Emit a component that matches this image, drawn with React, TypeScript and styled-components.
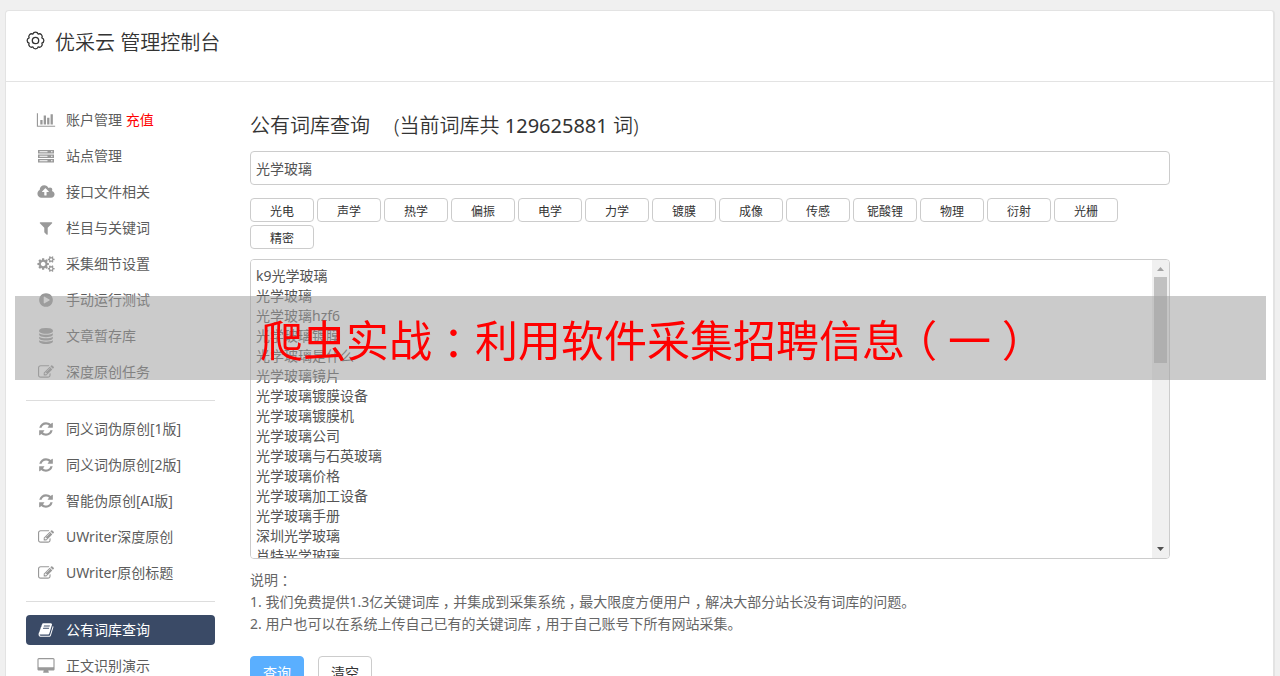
import React from 'react';
import styled, { createGlobalStyle } from 'styled-components';

const Global = createGlobalStyle`
  * { box-sizing: border-box; }
  html { scrollbar-width: none; }
  body {
    margin: 0;
    background: #f0f0f0;
    color: #555;
    font: 400 14px/20px "Noto Sans", "Noto Sans CJK SC", sans-serif;
  }
  button, input, textarea { font: inherit; }
`;

const Page = styled.div`
  padding: 10px 5px 0;
`;

const Panel = styled.div`
  background: #fff;
  border: 1px solid #e3e3e3;
  border-right-width: 2px;
  border-radius: 4px 4px 0 0;
`;

const Header = styled.header`
  display: flex;
  align-items: flex-start;
  gap: 10px;
  height: 71px;
  padding: 20px 20px 0;
  border-bottom: 1px solid #e3e3e3;
  color: #333;
`;

const HeaderTitle = styled.h1`
  margin: 0;
  font-size: 20px;
  line-height: 24px;
  font-weight: 350;
`;

const Body = styled.div`
  display: flex;
  align-items: flex-start;
  gap: 35px;
  padding: 23px 103px 20px 20px;
`;

const Sidebar = styled.nav`
  flex: none;
  width: 189px;
`;

const NavGroup = styled.ul`
  display: flex;
  flex-direction: column;
  gap: 6px;
  margin: 0;
  padding: 0 0 13px;
  list-style: none;

  & + & {
    padding-top: 13px;
    border-top: 1px solid #ddd;
  }
`;

const NavLink = styled.a<{ $active?: boolean }>`
  display: flex;
  align-items: center;
  gap: 10px;
  height: 30px;
  padding: 0 10px;
  border-radius: 4px;
  color: ${(p) => (p.$active ? '#fff' : '#5c5c5c')};
  background: ${(p) => (p.$active ? '#3a4a66' : 'transparent')};
  text-decoration: none;
  white-space: nowrap;

  svg {
    flex: none;
    width: 20px;
    color: ${(p) => (p.$active ? '#fff' : '#999')};
  }
`;

const Recharge = styled.span`
  color: #f00;
`;

const Main = styled.main`
  flex: 1;
  min-width: 0;
`;

const Title = styled.h2`
  display: flex;
  gap: 24px;
  margin: 0 0 11px;
  padding-top: 7px;
  font-size: 20px;
  line-height: 28px;
  font-weight: 350;
  color: #333;
`;

const Total = styled.span`
  font-weight: 400;
`;

const Search = styled.input`
  display: block;
  width: 100%;
  height: 34px;
  padding: 4px 5px;
  border: 1px solid #ccc;
  border-radius: 4px;
  color: #555;
`;

const Tags = styled.div`
  display: flex;
  flex-wrap: wrap;
  gap: 3px;
  margin: 13px 0 10px;
`;

const Tag = styled.button`
  width: 64px;
  height: 24px;
  padding: 3px 0 0;
  border: 1px solid #ccc;
  border-radius: 4px;
  background: #fff;
  color: #333;
  font-size: 12px;
  line-height: 18px;
`;

const WordsBox = styled.div`
  display: flex;
  height: 300px;
  border: 1px solid #ccc;
  border-radius: 4px;
  overflow: hidden;
`;

const Words = styled.textarea`
  flex: 1;
  min-width: 0;
  padding: 6px 5px;
  border: 0;
  outline: 0;
  background: #fff;
  color: #555;
  line-height: 20px;
  resize: none;
  scrollbar-width: none;
`;

const Scrollbar = styled.div`
  display: flex;
  flex-direction: column;
  align-items: center;
  width: 17px;
  background: #f0f0f0;
`;

const Track = styled.div`
  flex: 1;
  width: 13px;
`;

const Thumb = styled.div`
  height: 86px;
  background: #c1c1c1;
`;

const Notes = styled.div`
  margin: 10px 0 21px;
  line-height: 22px;
  color: #666;

  p { margin: 0; }
`;

const Actions = styled.div`
  display: flex;
  gap: 14px;
`;

const Action = styled.button<{ $primary?: boolean }>`
  width: 54px;
  height: 34px;
  padding: 0;
  border: 1px solid ${(p) => (p.$primary ? '#5aafff' : '#ccc')};
  border-radius: 4px;
  background: ${(p) => (p.$primary ? '#5aafff' : '#fff')};
  color: ${(p) => (p.$primary ? '#fff' : '#333')};
`;

const Banner = styled.div`
  position: absolute;
  top: 296px;
  left: 15px;
  right: 14px;
  height: 84px;
  padding-left: 245px;
  background: rgba(160, 160, 160, 0.55);
  color: #f00;
  font-size: 43px;
  line-height: 90px;
  white-space: nowrap;
  overflow: hidden;
`;

/* Full-width punctuation set in the middle of its em square */
const Mark = styled.span`
  display: inline-block;
  width: 1em;
  text-align: center;
  font-feature-settings: "halt";
`;

const Centered = ({ text }: { text: string }) => (
  <>
    {text.split(/([：，（）])/).map((part, i) => (i % 2 ? <Mark key={i}>{part}</Mark> : part))}
  </>
);

type Glyph = { box: string; d: string };

const glyphs: Record<string, Glyph> = {
  chart: { box: '0 0 2048 1792', d: 'M640 896v512h-256v-512h256zM1024 384v1024h-256v-1024h256zM2048 1536v128h-2048v-1536h128v1408h1920zM1408 640v768h-256v-768h256zM1792 256v1152h-256v-1152h256z' },
  server: { box: '0 0 16 16', d: 'M0 2h16v3.500H0zM0 6.500h16V10H0zM0 11h16v3.500H0zM1.500 3.200v1h8v-1zM1.500 7.700v1h8v-1zM1.500 12.200v1h8v-1zM13 3.200v1h1.500v-1zM13 7.700v1h1.500v-1zM13 12.200v1h1.500v-1z' },
  cloud: { box: '0 0 1920 1792', d: 'M1280 864q0-14-9-23l-352-352q-9-9-23-9t-23 9l-351 351q-10 12-10 24 0 14 9 23t23 9h224v352q0 13 9.500 22.500t22.500 9.500h192q13 0 22.500-9.500t9.500-22.500v-352h224q13 0 22.500-9.500t9.500-22.500zm640 288q0 159-112.500 271.500t-271.500 112.500h-1088q-185 0-316.500-131.500t-131.500-316.500q0-130 70-240t188-165q-2-30-2-43 0-212 150-362t362-150q156 0 285.500 87t188.500 231q71-62 166-62 106 0 181 75t75 181q0 76-41 138 130 31 213.500 135.500t83.500 238.500z' },
  filter: { box: '0 0 1792 1792', d: 'M1595 295q17 41-14 70l-493 493v742q0 42-39 59-13 5-25 5-27 0-45-19l-256-256q-19-19-19-45v-486l-493-493q-31-29-14-70 17-39 59-39h1280q42 0 59 39z' },
  cogs: { box: '0 0 1920 1792', d: 'M896 896q0-106-75-181t-181-75-181 75-75 181 75 181 181 75 181-75 75-181zm768 512q0-52-38-90t-90-38-90 38-38 90q0 53 37.500 90.500t90.500 37.500 90.500-37.500 37.500-90.500zm0-1024q0-52-38-90t-90-38-90 38-38 90q0 53 37.500 90.500t90.500 37.500 90.500-37.500 37.500-90.500zm-384 421v185q0 10-7 19.500t-16 10.500l-155 24q-11 35-32 76 34 48 90 115 7 11 7 20 0 12-7 19-23 30-82.500 89.500t-78.500 59.500q-11 0-21-7l-115-90q-37 19-77 31-11 108-23 155-7 24-30 24h-186q-11 0-20-7.500t-10-17.500l-23-153q-34-10-75-31l-118 89q-7 7-20 7-11 0-21-8-144-133-144-160 0-9 7-19 10-14 41-53t47-61q-23-44-35-82l-152-24q-10-1-17-9.500t-7-19.500v-185q0-10 7-19.500t16-10.500l155-24q11-35 32-76-34-48-90-115-7-11-7-20 0-12 7-20 22-30 82-89t79-59q11 0 21 7l115 90q34-18 77-32 11-108 23-154 7-24 30-24h186q11 0 20 7.500t10 17.500l23 153q34 10 75 31l118-89q8-7 20-7 11 0 21 8 144 133 144 160 0 8-7 19-12 16-42 54t-45 60q23 48 34 82l152 23q10 2 17 10.500t7 19.500zm640 533v140q0 16-149 31-12 27-30 52 51 113 51 138 0 4-4 7-122 71-124 71-8 0-46-47t-52-68q-20 2-30 2t-30-2q-14 21-52 68t-46 47q-2 0-124-71-4-3-4-7 0-25 51-138-18-25-30-52-149-15-149-31v-140q0-16 149-31 13-29 30-52-51-113-51-138 0-4 4-7 4-2 35-20t59-34 30-16q8 0 46 46.500t52 67.500q20-2 30-2t30 2q51-71 92-112l6-2q4 0 124 70 4 3 4 7 0 25-51 138 17 23 30 52 149 15 149 31zm0-1024v140q0 16-149 31-12 27-30 52 51 113 51 138 0 4-4 7-122 71-124 71-8 0-46-47t-52-68q-20 2-30 2t-30-2q-14 21-52 68t-46 47q-2 0-124-71-4-3-4-7 0-25 51-138-18-25-30-52-149-15-149-31v-140q0-16 149-31 13-29 30-52-51-113-51-138 0-4 4-7 4-2 35-20t59-34 30-16q8 0 46 46.500t52 67.500q20-2 30-2t30 2q51-71 92-112l6-2q4 0 124 70 4 3 4 7 0 25-51 138 17 23 30 52 149 15 149 31z' },
  play: { box: '0 0 1792 1792', d: 'M896 128q209 0 385.500 103t279.500 279.500 103 385.500-103 385.500-279.500 279.500-385.500 103-385.500-103-279.500-279.500-103-385.500 103-385.500 279.500-279.500 385.500-103zm384 823q32-18 32-55t-32-55l-544-320q-31-19-64-1-32 19-32 56v640q0 37 32 56 16 8 32 8 17 0 32-9z' },
  database: { box: '0 0 1792 1792', d: 'M896 768q237 0 443-43t325-127v170q0 69-103 128t-280 93.500-385 34.500-385-34.500-280-93.500-103-128v-170q119 84 325 127t443 43zm0 768q237 0 443-43t325-127v170q0 69-103 128t-280 93.500-385 34.500-385-34.500-280-93.500-103-128v-170q119 84 325 127t443 43zm0-384q237 0 443-43t325-127v170q0 69-103 128t-280 93.500-385 34.500-385-34.500-280-93.500-103-128v-170q119 84 325 127t443 43zm0-1152q208 0 385 34.500t280 93.500 103 128v128q0 69-103 128t-280 93.500-385 34.500-385-34.500-280-93.500-103-128v-128q0-69 103-128t280-93.500 385-34.500z' },
  edit: { box: '0 0 1792 1792', d: 'M888 1184l116-116-152-152-116 116v56h96v96h56zm440-720q-16-16-33 1l-350 350q-17 17-1 33t33-1l350-350q17-17 1-33zm80 594v190q0 119-84.500 203.500t-203.500 84.500h-832q-119 0-203.500-84.500t-84.500-203.500v-832q0-119 84.500-203.500t203.500-84.500h832q63 0 117 25 15 7 18 23 3 17-9 29l-49 49q-14 14-32 8-23-6-45-6h-832q-66 0-113 47t-47 113v832q0 66 47 113t113 47h832q66 0 113-47t47-113v-126q0-13 9-22l64-64q15-15 35-7t20 29zm-96-738l288 288-672 672h-288v-288zm444 132l-92 92-288-288 92-92q28-28 68-28t68 28l152 152q28 28 28 68t-28 68z' },
  refresh: { box: '0 0 1792 1792', d: 'M1639 1056q0 5-1 7-64 268-268 434.500t-478 166.500q-146 0-282.500-55t-243.500-157l-129 129q-19 19-45 19t-45-19-19-45v-448q0-26 19-45t45-19h448q26 0 45 19t19 45-19 45l-137 137q71 66 161 102t187 36q134 0 250-65t186-179q11-17 53-117 8-23 30-23h192q13 0 22.500 9.500t9.500 22.500zm25-800v448q0 26-19 45t-45 19h-448q-26 0-45-19t-19-45 19-45l138-138q-148-137-349-137-134 0-250 65t-186 179q-11 17-53 117-8 23-30 23h-199q-13 0-22.500-9.500t-9.500-22.500v-7q65-268 270-434.500t480-166.500q146 0 284 55.500t245 156.500l130-129q19-19 45-19t45 19 19 45z' },
  book: { box: '0 0 1792 1792', d: 'M1703 478q40 57 18 129l-275 906q-19 64-76.500 107.500t-122.500 43.500h-923q-77 0-148.500-53.500t-99.500-131.500q-24-67-2-127 0-4 3-27t4-37q1-8-3-21.500t-3-19.500q2-11 8-21t16.500-23.500 16.500-23.500q23-38 45-91.500t30-91.500q3-10 .5-30t-.5-28q3-11 17-28t17-23q21-36 42-92t25-90q1-9-2.500-32t.5-28q4-13 22-30.500t22-22.500q19-26 42.500-84.500t27.500-96.500q1-8-3-25.500t-2-26.500q2-8 9-18t18-23 17-21q8-12 16.500-30.500t15-35 16-36 19.500-32 26.500-23.500 36-11.500 47.500 5.500l-1 3q38-9 51-9h761q74 0 114 56t18 130l-274 906q-36 119-71.500 153.500t-128.500 34.500h-869q-27 0-38 15-11 16-1 43 24 70 144 70h923q29 0 56-15.500t35-41.500l300-987q7-22 5-57 38 15 59 43zm-1064 2q-4 13 2 22.500t20 9.500h608q13 0 25.500-9.500t16.500-22.500l21-64q4-13-2-22.500t-20-9.500h-608q-13 0-25.500 9.500t-16.500 22.500zm-83 256q-4 13 2 22.500t20 9.500h608q13 0 25.500-9.500t16.500-22.500l21-64q4-13-2-22.500t-20-9.500h-608q-13 0-25.500 9.500t-16.500 22.500z' },
  desktop: { box: '-64 0 1920 1792', d: 'M1728 992v-832q0-13-9.500-22.500t-22.500-9.500h-1600q-13 0-22.500 9.500t-9.500 22.500v832q0 13 9.500 22.500t22.500 9.500h1600q13 0 22.500-9.500t9.500-22.500zm128-832v1088q0 66-47 113t-113 47h-544q0 37 16 77.500t32 71 16 43.500q0 26-19 45t-45 19h-512q-26 0-45-19t-19-45q0-14 16-44t32-70 16-78h-544q-66 0-113-47t-47-113v-1088q0-66 47-113t113-47h1600q66 0 113 47t47 113z' },
};

const Icon = ({ name }: { name: string }) => (
  <svg viewBox={glyphs[name].box} height={16} fill="currentColor" fillRule={name === 'server' ? 'evenodd' : undefined} aria-hidden>
    <path d={glyphs[name].d} />
  </svg>
);

const GearIcon = () => (
  <svg width="19" height="19" viewBox="0 0 19 19" fill="none" stroke="currentColor" strokeWidth="1.3" strokeLinejoin="round" aria-hidden>
    <path d="M15.870 6.860a2.750 2.750 0 0 1 0 5.280a2.750 2.750 0 0 1-3.730 3.730a2.750 2.750 0 0 1-5.280 0a2.750 2.750 0 0 1-3.730-3.730a2.750 2.750 0 0 1 0-5.280a2.750 2.750 0 0 1 3.730-3.730a2.750 2.750 0 0 1 5.280 0a2.750 2.750 0 0 1 3.730 3.730z" />
    <circle cx="9.500" cy="9.500" r="3.200" />
  </svg>
);

const Arrow = ({ down }: { down?: boolean }) => (
  <svg width="17" height="17" viewBox="0 0 17 17" fill={down ? '#505050' : '#a3a3a3'} aria-hidden>
    <path d={down ? 'M5 6h7l-3.500 4z' : 'M5 11h7L8.500 7z'} />
  </svg>
);

type Item = { icon: string; label: string; extra?: string; active?: boolean };

const groups: Item[][] = [
  [
    { icon: 'chart', label: '账户管理', extra: '充值' },
    { icon: 'server', label: '站点管理' },
    { icon: 'cloud', label: '接口文件相关' },
    { icon: 'filter', label: '栏目与关键词' },
    { icon: 'cogs', label: '采集细节设置' },
    { icon: 'play', label: '手动运行测试' },
    { icon: 'database', label: '文章暂存库' },
    { icon: 'edit', label: '深度原创任务' },
  ],
  [
    { icon: 'refresh', label: '同义词伪原创[1版]' },
    { icon: 'refresh', label: '同义词伪原创[2版]' },
    { icon: 'refresh', label: '智能伪原创[AI版]' },
    { icon: 'edit', label: 'UWriter深度原创' },
    { icon: 'edit', label: 'UWriter原创标题' },
  ],
  [
    { icon: 'book', label: '公有词库查询', active: true },
    { icon: 'desktop', label: '正文识别演示' },
  ],
];

const tags = ['光电', '声学', '热学', '偏振', '电学', '力学', '镀膜', '成像', '传感', '铌酸锂', '物理', '衍射', '光栅', '精密'];

const words = [
  'k9光学玻璃', '光学玻璃', '光学玻璃hzf6', '光学玻璃镀膜', '光学玻璃是什么', '光学玻璃镜片', '光学玻璃镀膜设备',
  '光学玻璃镀膜机', '光学玻璃公司', '光学玻璃与石英玻璃', '光学玻璃价格', '光学玻璃加工设备', '光学玻璃手册',
  '深圳光学玻璃', '肖特光学玻璃',
];

const notes = [
  '说明：',
  '1. 我们免费提供1.3亿关键词库，并集成到采集系统，最大限度方便用户，解决大部分站长没有词库的问题。',
  '2. 用户也可以在系统上传自己已有的关键词库，用于自己账号下所有网站采集。',
];

export default function App() {
  return (
    <>
      <Global />
      <Page lang="zh-CN">
        <Panel>
          <Header>
            <GearIcon />
            <HeaderTitle>优采云 管理控制台</HeaderTitle>
          </Header>
          <Body>
            <Sidebar>
              {groups.map((items, i) => (
                <NavGroup key={i}>
                  {items.map((item) => (
                    <li key={item.label}>
                      <NavLink href="#" $active={item.active}>
                        <Icon name={item.icon} />
                        <span>
                          {item.label}
                          {item.extra && <Recharge> {item.extra}</Recharge>}
                        </span>
                      </NavLink>
                    </li>
                  ))}
                </NavGroup>
              ))}
            </Sidebar>
            <Main>
              <Title>
                <span>公有词库查询</span>
                <span>(当前词库共 <Total>129625881</Total> 词)</span>
              </Title>
              <Search aria-label="关键词" defaultValue="光学玻璃" />
              <Tags>
                {tags.map((t) => (
                  <Tag key={t} type="button">{t}</Tag>
                ))}
              </Tags>
              <WordsBox>
                <Words aria-label="词库结果" defaultValue={words.join('\n')} />
                <Scrollbar aria-hidden>
                  <Arrow />
                  <Track>
                    <Thumb />
                  </Track>
                  <Arrow down />
                </Scrollbar>
              </WordsBox>
              <Notes>
                {notes.map((n) => (
                  <p key={n}><Centered text={n} /></p>
                ))}
              </Notes>
              <Actions>
                <Action type="button" $primary>查询</Action>
                <Action type="button">清空</Action>
              </Actions>
            </Main>
          </Body>
        </Panel>
      </Page>
      <Banner lang="zh-CN"><Centered text="爬虫实战：利用软件采集招聘信息（一）" /></Banner>
    </>
  );
}
